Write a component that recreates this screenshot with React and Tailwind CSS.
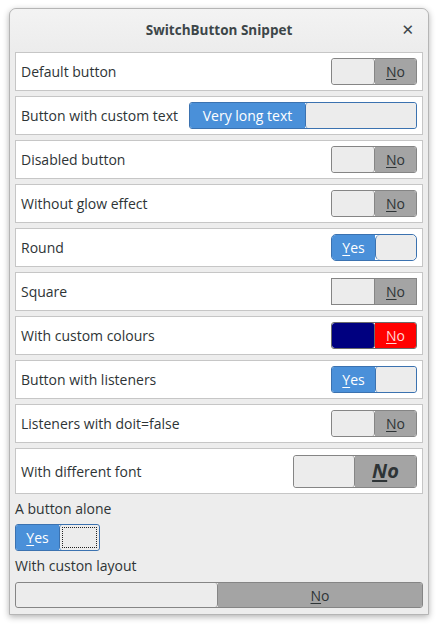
import React from "react";

const font = { fontFamily: '"Open Sans", "DejaVu Sans", sans-serif' };

function Mn({ c, rest }) {
  return (
    <span>
      <span className="underline underline-offset-2">{c}</span>
      {rest}
    </span>
  );
}

// off switch: light left, gray right with "No"
function Off({ w = "w-[86px]", h = "h-[27px]", left = "w-[43px]", round = "rounded-[3px]", leftBg = "bg-[#ececec]", rightBg = "bg-[#a4a4a4]", text = "text-[#2e3436]", label = <Mn c="N" rest="o" />, labelCls = "text-[14px]", border = "border-[#858585]" }) {
  return (
    <div className={`flex ${w} ${h} border ${border} ${round} overflow-hidden`}>
      <div className={`${left} shrink-0 ${leftBg} border-r ${border} ${round}`}></div>
      <div className={`flex-1 flex items-center justify-center ${rightBg} ${text} ${labelCls}`}>{label}</div>
    </div>
  );
}

// on switch: blue left with label, light right
function On({ w = "w-[86px]", h = "h-[27px]", left = "w-[43px]", round = "rounded-[3px]", label = <Mn c="Y" rest="es" />, focus = false }) {
  return (
    <div className={`flex ${w} ${h} border border-[#3b72b0] ${round} overflow-hidden`}>
      <div className={`${left} shrink-0 bg-[#4a90d9] text-white text-[14px] flex items-center justify-center`}>{label}</div>
      <div className={`flex-1 bg-[#ececec] border-l border-[#3b72b0] ${round} p-[2px]`}>
        {focus && <div className="w-full h-full border border-dotted border-[#222]"></div>}
      </div>
    </div>
  );
}

function Row({ label, children, tall = false }) {
  return (
    <div className={`flex items-center justify-between bg-white border border-[#c6c6c6] pl-[5px] pr-[5px] ${tall ? "h-[46px]" : "h-[39px]"}`}>
      <span className="text-[14px] text-[#2e3436]">{label}</span>
      {children}
    </div>
  );
}

export default function App() {
  return (
    <div className="min-h-screen bg-white pt-[8px] pl-[9px]" style={font}>
      <div className="w-[420px] bg-[#ededed] border border-[#b5b5b5] rounded-t-[7px] shadow-[0_2px_6px_rgba(0,0,0,0.3)]">
        {/* Title bar */}
        <div className="relative h-[43px] flex items-center justify-center rounded-t-[7px] bg-gradient-to-b from-[#f3f3f3] to-[#ececec]">
          <span className="text-[13.5px] font-bold text-[#3d4649]">SwitchButton Snippet</span>
          <span className="absolute right-[14px] top-[13px] text-[15px] font-bold text-[#3d4649] leading-none">✕</span>
        </div>

        <div className="px-[5px] pb-[6px] flex flex-col">
          <div className="flex flex-col gap-[5px]">
            <Row label="Default button"><Off /></Row>
            <Row label="Button with custom text">
              <On w="w-[228px]" left="w-[115px]" label="Very long text" />
            </Row>
            <Row label="Disabled button"><Off /></Row>
            <Row label="Without glow effect"><Off /></Row>
            <Row label="Round"><On round="rounded-[5px]" /></Row>
            <Row label="Square"><Off round="rounded-none" /></Row>
            <Row label="With custom colours">
              <Off leftBg="bg-[#000080]" rightBg="bg-[#ff0000]" text="text-[#ffd6d6]" border="border-[#6b6b6b]" />
            </Row>
            <Row label="Button with listeners"><On /></Row>
            <Row label="Listeners with doit=false"><Off /></Row>
            <Row label="With different font" tall>
              <Off
                w="w-[124px]"
                h="h-[33px]"
                left="w-[61px]"
                labelCls="text-[20px] font-bold italic"
                label={<Mn c="N" rest="o" />}
              />
            </Row>
          </div>

          <div className="mt-[6px] h-[18px] leading-[18px] text-[14px] text-[#2e3436]">A button alone</div>
          <div className="mt-[6px]">
            <On w="w-[85px]" focus />
          </div>
          <div className="mt-[6px] h-[18px] leading-[18px] text-[14px] text-[#2e3436]">With custon layout</div>
          <div className="mt-[7px]">
            <Off w="w-full" h="h-[26px]" left="w-[202px]" />
          </div>
        </div>
      </div>
    </div>
  );
}
